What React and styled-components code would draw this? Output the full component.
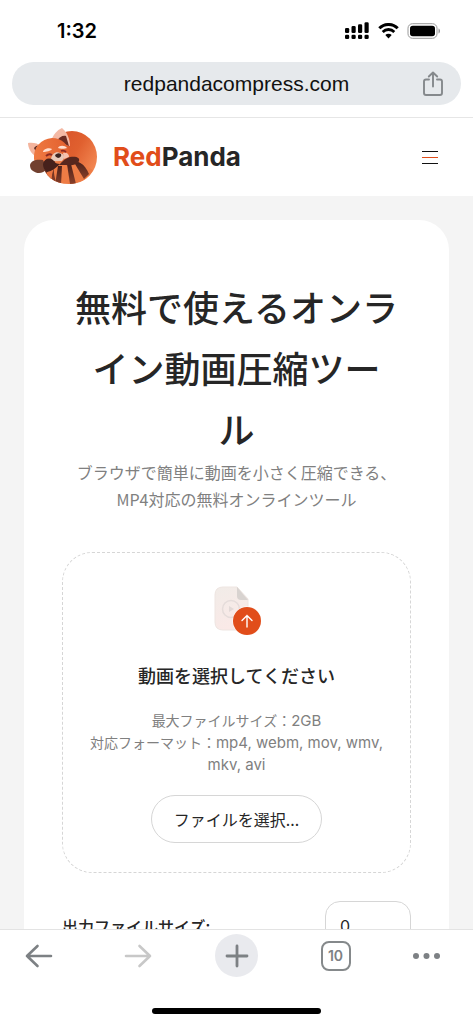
import styled, { createGlobalStyle } from "styled-components";

const App = () => {
  return (
    <Screen>
      <GlobalStyle />

      <StatusBar>
        <Clock>1:32</Clock>
        <StatusIcons>
          <SignalIcon />
          <WifiIcon />
          <BatteryIcon />
        </StatusIcons>
      </StatusBar>

      <AddressBar>
        <Address>redpandacompress.com</Address>
        <ShareButton aria-label="Share">
          <ShareIcon />
        </ShareButton>
      </AddressBar>

      <SiteHeader>
        <Brand href="#">
          <PandaLogo />
          <BrandName>
            <span>Red</span>Panda
          </BrandName>
        </Brand>
        <MenuButton aria-label="Menu">
          <i />
          <i />
          <i />
        </MenuButton>
      </SiteHeader>

      <Content>
        <Card>
          <Title>
            無料で使えるオンライン動画圧縮ツー
            <br />ル
          </Title>
          <Subtitle>
            ブラウザで簡単に動画を小さく圧縮できる、MP4対応の無料オンラインツール
          </Subtitle>

          <DropZone>
            <UploadIcon />
            <DropTitle>動画を選択してください</DropTitle>
            <DropHint>
              最大ファイルサイズ：<Latin>2GB</Latin>
              <br />
              対応フォーマット：<Latin>mp4, webm, mov, wmv, mkv, avi</Latin>
            </DropHint>
            <SelectButton>ファイルを選択...</SelectButton>
          </DropZone>

          <Field>
            <FieldLabel htmlFor="size">出力ファイルサイズ:</FieldLabel>
            <FieldInput id="size" type="text" defaultValue="0" />
          </Field>
        </Card>
      </Content>

      <BottomBar>
        <Toolbar>
          <ToolButton aria-label="Back">
            <ArrowIcon />
          </ToolButton>
          <ToolButton aria-label="Forward" faded>
            <ArrowIcon forward />
          </ToolButton>
          <ToolButton aria-label="New tab" filled>
            <svg width="24" height="24" viewBox="0 0 24 24" {...stroke}>
              <path d="M12 2v20M2 12h20" strokeWidth="2.800" />
            </svg>
          </ToolButton>
          <ToolButton aria-label="Tabs">
            <TabCount>10</TabCount>
          </ToolButton>
          <MoreButton aria-label="More">
            <svg width="28" height="8" viewBox="0 0 28 8" fill="currentColor">
              <circle cx="3" cy="4" r="3" />
              <circle cx="13.500" cy="4" r="3" />
              <circle cx="24" cy="4" r="3" />
            </svg>
          </MoreButton>
        </Toolbar>
        <HomeIndicator />
      </BottomBar>
    </Screen>
  );
};

const stroke = {
  fill: "none",
  stroke: "currentColor",
  strokeLinecap: "round",
  strokeLinejoin: "round",
};

const ArrowIcon = ({ forward }) => (
  <svg width="28" height="24" viewBox="0 0 28 24" {...stroke}>
    <path
      d={forward ? "M2 12h24M15.500 2l10.500 10-10.500 10" : "M26 12H2M12.500 2L2 12l10.500 10"}
      strokeWidth="2.600"
    />
  </svg>
);

const SignalIcon = () => (
  <svg width="26" height="18" viewBox="0 0 26 18">
    {[0, 1, 2, 3].map((i) => (
      <g key={i}>
        <rect
          x={1 + i * 6.5}
          y={6 - i * 1.9}
          width="4.200"
          height={5 + i * 1.9}
          rx="1.300"
        />
        <rect x={1 + i * 6.5} y="12.800" width="4.200" height="4.200" rx="1.300" />
      </g>
    ))}
  </svg>
);

const WifiIcon = () => (
  <svg width="21" height="16" viewBox="0 0 21 16" fill="none" stroke="#000">
    <path d="M1.300 5.300a13 13 0 0 1 18.400 0" strokeWidth="3" />
    <path d="M4.700 8.900a8.200 8.200 0 0 1 11.600 0" strokeWidth="2.800" />
    <path d="M10.500 15.500l-3.200-3.400a4.500 4.500 0 0 1 6.400 0z" fill="#000" stroke="none" />
  </svg>
);

const BatteryIcon = () => (
  <svg width="34" height="16" viewBox="0 0 34 16">
    <rect x="1" y="0.700" width="29" height="14.600" rx="4.500" fill="none" stroke="#999" />
    <rect x="3" y="2.700" width="25" height="10.600" rx="2.800" />
    <path d="M31.500 5.500c2 .6 2 4.400 0 5z" fill="#999" />
  </svg>
);

const ShareIcon = () => (
  <svg width="22" height="26" viewBox="0 0 22 26" {...stroke} strokeWidth="1.900">
    <path d="M7 8.500H4a2 2 0 0 0-2 2v11.500a2 2 0 0 0 2 2h14a2 2 0 0 0 2-2V10.500a2 2 0 0 0-2-2h-3" />
    <path d="M11 15.500V2M6.800 5.500L11 1.500l4.200 4" />
  </svg>
);

const PandaLogo = () => (
  <svg width="72" height="58" viewBox="0 0 72 58" aria-hidden="true">
    <defs>
      <linearGradient id="body" x1="0.200" y1="0.200" x2="1" y2="0.700">
        <stop offset="0" stopColor="#d9552a" />
        <stop offset="0.450" stopColor="#e0602f" />
        <stop offset="1" stopColor="#f48a55" />
      </linearGradient>
      <linearGradient id="head" x1="0" y1="0.500" x2="1" y2="0.300">
        <stop offset="0" stopColor="#ef7a42" />
        <stop offset="1" stopColor="#e2602f" />
      </linearGradient>
      <linearGradient id="stripe" x1="0" y1="0" x2="0" y2="1">
        <stop offset="0" stopColor="#4a211b" />
        <stop offset="1" stopColor="#8a3f28" />
      </linearGradient>
      <clipPath id="tail">
        <path d="M16 34c2 14 12 22 27 22 11 0 19-5 24-14-6-3-12-7-17-9H34z" />
      </clipPath>
    </defs>
    <ellipse cx="46" cy="29" rx="25" ry="26" fill="url(#body)" />
    <path d="M2 15c4-1 10 0 13 3l-6 10c-4-3-7-8-7-13z" fill="#f4b49d" />
    <path d="M8 20c2-3 5-3 7-2l-5 6z" fill="#54261e" />
    <path d="M25 13c2-6 6-11 11-13 5 4 8 11 8 18z" fill="#f4b9a5" />
    <path d="M31 13c2-4 6-6 9-5l3 10z" fill="#6b2c22" />
    <path
      d="M8 31C7 19 15 11 26 10c10 0 17 7 18 17-3 10-10 15-19 15-9 0-16-4-17-11z"
      fill="url(#head)"
    />
    <path d="M17 24c0-3 6-5 9-3-1 2-6 3-9 3z" fill="#ffdfd0" />
    <path d="M32 20c1-3 7-3 9 0-2 1-7 1-9 0z" fill="#ffdfd0" />
    <path d="M37 25c4-1 6 1 6 4l-5 2z" fill="#f6c2ad" />
    <path d="M20 28q3-3 6-1M35 23q3-1 5 1" fill="none" stroke="#8d2a22" strokeWidth="1.800" />
    <path d="M25 31c1-5 5-8 9-6 4 1 5 4 3 7l-5 4z" fill="#e9c9b8" />
    <path d="M29 27q3-3 6-1 1 3-3 4-3-1-3-3z" fill="#3d2420" />
    <g clipPath="url(#tail)">
      <path d="M14 32h56v26H14z" fill="#ee7c45" />
      <path d="M14 30h16c-3 8-3 14 0 24-10-2-14-10-16-24z" fill="url(#stripe)" />
      <path d="M19 47l8-11 2 2c-3 6-4 12-3 18z" fill="#e97542" />
      <path d="M32 38h4l-1 19h-6z" fill="url(#stripe)" />
      <path d="M41 36h4l5 20h-6z" fill="url(#stripe)" />
      <path d="M49 36l4-3c5 4 8 8 10 13l-5 5z" fill="url(#stripe)" />
    </g>
    <path d="M4 37c1-5 7-6 13-5l4 9c-4 5-10 5-14 2-2-1-3-3-3-6z" fill="#71402f" />
    <path d="M17 36c1-5 6-7 10-4 2 3 4 4 7 4-4 4-8 7-13 8-3-2-4-5-4-8z" fill="#46211b" />
    <path d="M33 37c3-3 5-6 11-8 7-1 10 1 9 4-2 4-8 5-13 4z" fill="#57271e" />
  </svg>
);

const UploadIcon = () => (
  <svg width="50" height="52" viewBox="0 0 50 52" aria-hidden="true">
    <defs>
      <linearGradient id="sheet" x1="0" y1="0" x2="0.300" y2="1">
        <stop offset="0" stopColor="#f1ece8" />
        <stop offset="1" stopColor="#fae9e7" />
      </linearGradient>
    </defs>
    <path
      d="M11 1h14l11 12v23q0 8-8 8H11q-8 0-8-8V9q0-8 8-8z"
      fill="url(#sheet)"
      stroke="#eee5e1"
    />
    <path d="M25 1l11 13h-7q-4 0-4-4z" fill="#d8d3d0" />
    <circle cx="19" cy="23" r="8.500" fill="none" stroke="#e5dcda" strokeWidth="1.500" />
    <path d="M17 20v6l5-3z" fill="#e2d9d7" />
    <circle cx="35" cy="35" r="14.500" fill="#fff" />
    <circle cx="35" cy="35" r="14" fill="#e14d1a" />
    <path
      d="M35 41V29.500M30 34.500l5-5 5 5"
      fill="none"
      stroke="#fff"
      strokeWidth="1.400"
      strokeLinecap="round"
    />
  </svg>
);

const GlobalStyle = createGlobalStyle`
  *, *::before, *::after {
    box-sizing: border-box;
  }

  body {
    margin: 0;
    background: #fff;
    color: #262626;
    font-family: "Liberation Sans", "Noto Sans CJK JP", sans-serif;
  }

  h1, h2, p {
    margin: 0;
  }

  button {
    padding: 0;
    border: 0;
    background: none;
    font: inherit;
    cursor: pointer;
  }

  svg {
    display: block;
    flex-shrink: 0;
  }
`;

const Screen = styled.div`
  display: flex;
  flex-direction: column;
  height: 100vh;
`;

const StatusBar = styled.div`
  display: flex;
  align-items: center;
  justify-content: space-between;
  flex-shrink: 0;
  height: 62px;
  padding: 0 32px 0 57px;
`;

const Clock = styled.span`
  color: #000;
  font: 600 20px/24px Inter, sans-serif;
`;

const StatusIcons = styled.div`
  display: flex;
  align-items: center;
  gap: 8px;
`;

const AddressBar = styled.div`
  display: grid;
  grid-template-columns: 1fr auto 1fr;
  align-items: center;
  flex-shrink: 0;
  height: 43px;
  margin: 0 12px 12px;
  padding: 0 17px;
  border-radius: 22px;
  background: #e6e9ec;
`;

const Address = styled.span`
  grid-column: 2;
  color: #111;
  font: 400 21px/24px "Liberation Sans", sans-serif;
`;

const ShareButton = styled.button`
  justify-self: end;
  color: #85898c;
`;

const SiteHeader = styled.header`
  display: flex;
  align-items: center;
  justify-content: space-between;
  flex-shrink: 0;
  height: 79px;
  padding: 0 35px 0 26px;
  border-top: 1px solid #e6e6e6;
`;

const Brand = styled.a`
  display: flex;
  align-items: center;
  gap: 15px;
  color: #262626;
  text-decoration: none;
`;

const BrandName = styled.span`
  font: 700 26px/32px Inter, sans-serif;

  span {
    color: #e14d1a;
  }
`;

const MenuButton = styled.button`
  display: grid;
  gap: 5px;
  width: 16px;

  i {
    height: 1px;
    background: #111;
  }

  i:nth-child(2) {
    background: #e14d1a;
  }
`;

const Content = styled.main`
  flex: 1;
  min-height: 0;
  overflow: hidden;
  padding: 24px;
  background: #f4f4f4;
`;

const Card = styled.section`
  padding: 56px 38px 40px;
  border-radius: 30px;
  background: #fff;
`;

const Title = styled.h1`
  font: 500 36px/61px "Noto Sans CJK JP", sans-serif;
  text-align: center;
`;

const Subtitle = styled.p`
  color: #808080;
  font: 400 16px/27px "Noto Sans CJK JP", sans-serif;
  text-align: center;
`;

const DropZone = styled.div`
  display: flex;
  flex-direction: column;
  align-items: center;
  margin-top: 39px;
  padding: 33px 24px 29px;
  border: 1px dashed #d6d6d6;
  border-radius: 30px;
`;

const DropTitle = styled.h2`
  margin-top: 22px;
  font: 500 18px/30px "Noto Sans CJK JP", sans-serif;
`;

const DropHint = styled.p`
  margin: 19px 0 20px;
  color: #808080;
  font: 400 14px/22px "Noto Sans CJK JP", sans-serif;
  text-align: center;
`;

const Latin = styled.span`
  font: 400 15px/16px Inter, sans-serif;
`;

const SelectButton = styled.button`
  height: 48px;
  padding: 0 22px;
  border: 1px solid #d6d6d6;
  border-radius: 24px;
  color: #262626;
  font: 400 16px/24px "Noto Sans CJK JP", sans-serif;
`;

const Field = styled.div`
  display: flex;
  align-items: center;
  justify-content: space-between;
  margin-top: 28px;
`;

const FieldLabel = styled.label`
  font: 500 16px/24px "Noto Sans CJK JP", sans-serif;
`;

const FieldInput = styled.input`
  width: 86px;
  height: 50px;
  padding: 0 14px;
  border: 1px solid #d6d6d6;
  border-radius: 15px;
  color: #262626;
  font: 400 16px/24px Inter, sans-serif;
`;

const BottomBar = styled.footer`
  display: flex;
  flex-direction: column;
  align-items: center;
  flex-shrink: 0;
  height: 95px;
  padding-top: 4px;
  border-top: 1px solid #e3e3e3;
  background: #fff;
`;

const Toolbar = styled.nav`
  display: flex;
  justify-content: space-between;
  width: 100%;
  padding: 0 17px;
`;

const ToolButton = styled.button.withConfig({
  shouldForwardProp: (prop) => !["faded", "filled"].includes(prop),
})`
  display: grid;
  place-items: center;
  width: 43px;
  height: 43px;
  border-radius: 50%;
  background: ${({ filled }) => (filled ? "#e9eaee" : "none")};
  color: ${({ faded }) => (faded ? "#c8c8c8" : "#7d8184")};
`;

const MoreButton = styled(ToolButton)`
  justify-items: start;
`;

const TabCount = styled.span`
  display: grid;
  place-items: center;
  width: 30px;
  height: 30px;
  border: 2px solid #85898b;
  border-radius: 8px;
  font: 600 14px/16px Inter, sans-serif;
`;

const HomeIndicator = styled.div`
  width: 169px;
  height: 6px;
  margin-top: 31px;
  border-radius: 3px;
  background: #000;
`;

export default App;
